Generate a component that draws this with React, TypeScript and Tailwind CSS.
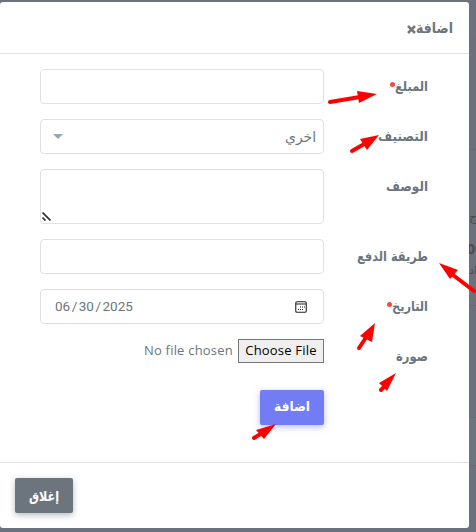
import type { ReactNode } from "react";

const arabic = "font-['DejaVu_Sans',sans-serif]";
const field = "w-[284px] rounded-[4px] border border-[#dee0e3] bg-white";

function Row({ label, width, required, className, children }: { label?: string; width?: number; required?: boolean; className: string; children: ReactNode }) {
  return (
    <div className={`flex items-start justify-between ${className}`} dir="ltr">
      {children}
      {label && (
        <div dir="rtl" className={`mt-[7px] flex h-5 items-center whitespace-nowrap text-[13.5px] font-bold text-[#6c757d] ${arabic}`}>
          <Word text={label} width={width} />
          {required && <span className="-mt-[3px] h-[5px] w-[5px] rounded-full bg-[#f34943]" />}
        </div>
      )}
    </div>
  );
}

function Word({ text, width }: { text: string; width?: number }) {
  return (
    <svg width={width} height="20" className="shrink-0 overflow-visible" direction="ltr">
      <text x="0" y="15" textLength={width} lengthAdjust="spacingAndGlyphs" fill="currentColor">{text}</text>
    </svg>
  );
}

function Arrow({ points, from, to }: { points: string; from: [number, number]; to: [number, number] }) {
  return (
    <g fill="#ff0000" stroke="#ff0000">
      <line x1={from[0]} y1={from[1]} x2={to[0]} y2={to[1]} strokeWidth="4" strokeLinecap="round" />
      <polygon points={points} stroke="none" />
    </g>
  );
}

export default function App() {
  return (
    <div className="relative flex h-[532px] w-[476px] overflow-hidden bg-[#6c727d] pt-[2px]">
      <div className="flex h-[526px] w-[469px] shrink-0 flex-col rounded-[3px] bg-white">
        <header dir="rtl" className={`flex h-[52px] items-center border-b border-[#dee0e3] pr-4 text-[15px] font-bold text-[#6c757d] ${arabic}`}>
          <Word text="اضافة" width={37} />
          <svg width="9" height="9" viewBox="0 0 9 9" className="mt-[3px] shrink-0 text-[#797979]">
            <path d="M1 1 8 8M8 1 1 8" stroke="currentColor" strokeWidth="2.5" />
          </svg>
        </header>
        <main className="h-[408px] pt-[15px] pr-[41px] pl-10">
          <Row label="المبلغ" width={33} required className="h-[50px]">
            <div className={`${field} h-[35px]`} />
          </Row>
          <Row label="التصنيف" width={50} className="h-[50px]">
            <div className={`${field} flex h-[35px] items-center justify-between pr-[7px] pl-3 text-[14px] text-[#6c757d] ${arabic}`}>
              <svg width="10" height="5"><path d="M0 0h10L5 5z" fill="#98a6ad" /></svg>
              <Word text="اخري" width={31} />
            </div>
          </Row>
          <Row label="الوصف" width={42} className="h-[70px]">
            <div className={`${field} flex h-[55px] items-end pb-[2px] pl-[1px]`}>
              <svg width="9" height="9" stroke="#333" strokeWidth="1.7"><path d="M.5.5l8 8M.5 5.5l3 3" /></svg>
            </div>
          </Row>
          <Row label="طريقة الدفع" width={71} className="h-[50px]">
            <div className={`${field} h-[35px]`} />
          </Row>
          <Row label="التاريخ" width={36} required className="h-[50px]">
            <div className={`${field} flex h-[35px] items-center justify-between pr-4 pl-[14px] font-['Roboto',sans-serif] text-[13.5px] text-[#6c757d]`}>
              <span className="flex">
                <span>06</span><span className="px-[1.5px]">/</span><span>30</span><span className="px-[1.5px]">/</span><span>2025</span>
              </span>
              <svg width="12" height="12" fill="none" stroke="#222">
                <rect x=".75" y=".75" width="10.5" height="10.5" rx="1.3" strokeWidth="1.1" />
                <path d="M1 3h10" strokeWidth="1" />
                <path d="M5 6h1M7 6h1M9 6h1M3 8.5h1M5 8.5h1M7 8.5h1" strokeWidth="1.2" />
              </svg>
            </div>
          </Row>
          <Row label="صورة" width={32} className="h-[51px]">
            <div className="flex h-6 w-[284px] items-center justify-end gap-1 whitespace-nowrap font-['Open_Sans',sans-serif] text-[13px] font-medium">
              <span className="w-[90px] tracking-[.2px] text-[#6c757d]">No file chosen</span>
              <span className="flex h-6 w-[86px] items-center justify-center border border-[#767676] bg-[#efefef] tracking-[.2px] text-black">Choose File</span>
            </div>
          </Row>
          <div className="flex w-[284px] justify-end">
            <button className={`flex h-[35px] w-16 items-center justify-center rounded-[2px] bg-[#727cf5] pb-[3px] text-[13.5px] font-bold text-white shadow-[0_2px_6px_rgba(114,124,245,0.5)] ${arabic}`}>
              <Word text="اضافة" width={36} />
            </button>
          </div>
        </main>
        <footer className="flex h-[66px] border-t border-[#dee2e6] pt-[15px] pl-[15px]">
          <button className={`flex h-[35px] w-[58px] items-center justify-center rounded-[2px] bg-[#6c757d] text-[13.5px] font-bold text-white shadow-[0_2px_6px_rgba(108,117,125,0.5)] ${arabic}`}>
            <Word text="إغلاق" width={30} />
          </button>
        </footer>
      </div>
      <aside className={`flex w-[7px] shrink-0 flex-col overflow-hidden pt-9 text-[#454c54] ${arabic}`}>
        <div className="h-28 w-5 border-b border-[#646b76] bg-[#6b7179]" />
        <div className="h-[156px] w-5 border-b border-[#646b76] bg-[#6b727a] pt-[57px]">
          <div className="h-7 text-[12px] leading-5">ج</div>
          <div className="-ml-[2px] h-[26px] font-['Open_Sans',sans-serif] text-[14px] font-bold leading-7">00</div>
          <div className="h-5 text-[11px] leading-5">اد</div>
        </div>
        <div className="h-28 w-5 border-b border-[#646b76]" />
        <div className="h-12 w-5 border-b border-[#646b76] bg-[#6b757b]" />
      </aside>
      <svg className="pointer-events-none absolute inset-0" width="476" height="532">
        <Arrow from={[330, 102]} to={[360, 97]} points="357,91 377,94 359,103" />
        <Arrow from={[352, 151]} to={[366, 143]} points="360,139 379,135 367,150" />
        <Arrow from={[474, 291]} to={[453, 275]} points="439,263 458,270 450,279" />
        <Arrow from={[359, 348]} to={[367, 336]} points="375,323 372,342 360,336" />
        <Arrow from={[381, 390]} to={[387, 384]} points="396,373 387,391 379,383" />
        <Arrow from={[254, 438]} to={[262, 433]} points="276,424 264,439 256,430" />
      </svg>
    </div>
  );
}
